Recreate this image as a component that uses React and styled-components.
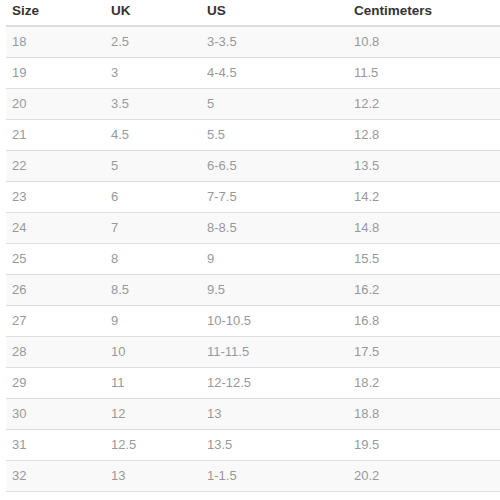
import React from "react";
import styled, { createGlobalStyle } from "styled-components";

const Global = createGlobalStyle`
  html, body { margin: 0; padding: 0; background: #fff; }
  body { font-family: "Liberation Sans", Arial, sans-serif; overflow: hidden; }
`;

const Wrap = styled.div`
  padding-left: 6px;
`;

const Table = styled.table`
  border-collapse: separate;
  border-spacing: 0;
  table-layout: fixed;
  width: 494px;
  font-size: 13px;
`;

const Col = styled.col`
  width: ${(p) => p.$w}px;
`;

const Th = styled.th`
  text-align: left;
  font-weight: bold;
  font-size: 13.5px;
  color: #333;
  line-height: 18px;
  padding: 2px 6px 5px;
  border-bottom: 1px solid #ddd;
`;

const Tr = styled.tr`
  background: ${(p) => (p.$striped ? "#f9f9f9" : "#fff")};
`;

const Td = styled.td`
  color: #999;
  line-height: 18px;
  padding: 6px 6px;
  border-top: 1px solid #ddd;
  white-space: nowrap;
`;

const rows = [
  ["18", "2.5", "3-3.5", "10.8"],
  ["19", "3", "4-4.5", "11.5"],
  ["20", "3.5", "5", "12.2"],
  ["21", "4.5", "5.5", "12.8"],
  ["22", "5", "6-6.5", "13.5"],
  ["23", "6", "7-7.5", "14.2"],
  ["24", "7", "8-8.5", "14.8"],
  ["25", "8", "9", "15.5"],
  ["26", "8.5", "9.5", "16.2"],
  ["27", "9", "10-10.5", "16.8"],
  ["28", "10", "11-11.5", "17.5"],
  ["29", "11", "12-12.5", "18.2"],
  ["30", "12", "13", "18.8"],
  ["31", "12.5", "13.5", "19.5"],
  ["32", "13", "1-1.5", "20.2"],
  ["33", "13.5", "2-2.5", "20.8"],
];

export default function App() {
  return (
    <>
      <Global />
      <Wrap>
        <Table>
          <colgroup>
            <Col $w={99} />
            <Col $w={96} />
            <Col $w={147} />
            <Col $w={152} />
          </colgroup>
          <thead>
            <tr>
              <Th>Size</Th>
              <Th>UK</Th>
              <Th>US</Th>
              <Th>Centimeters</Th>
            </tr>
          </thead>
          <tbody>
            {rows.map((r, i) => (
              <Tr key={r[0]} $striped={i % 2 === 0}>
                {r.map((c, j) => (
                  <Td key={j}>{c}</Td>
                ))}
              </Tr>
            ))}
          </tbody>
        </Table>
      </Wrap>
    </>
  );
}
